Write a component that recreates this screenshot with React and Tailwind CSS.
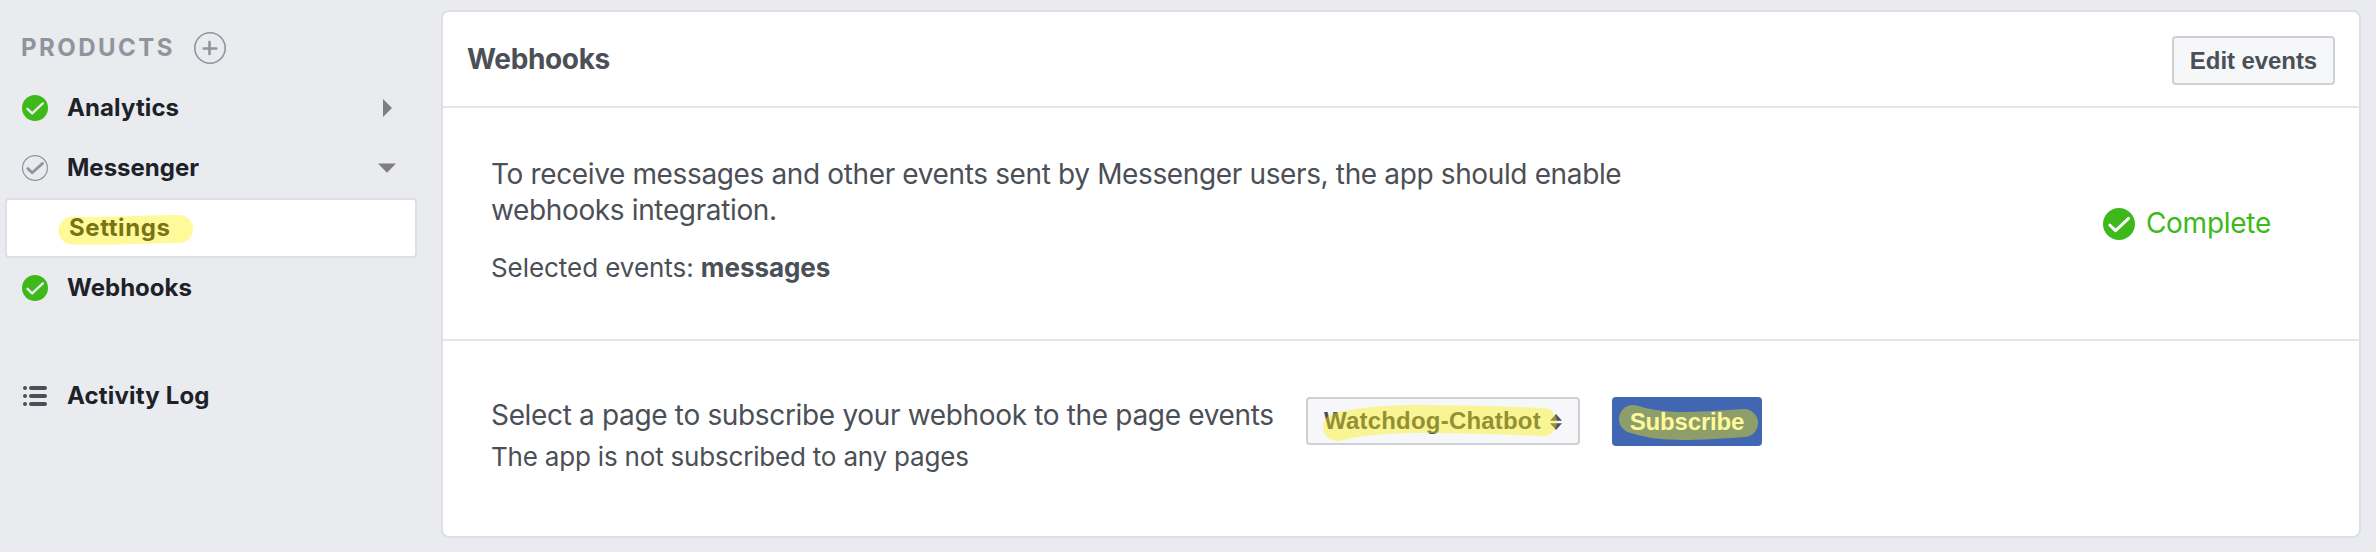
function CheckBadge({ className }) {
  return (
    <svg viewBox="0 0 26 26" className={className} fill="none">
      <circle cx="13" cy="13" r="13" fill="#3db91a" />
      <path d="M5.5 13.8 L10.2 18.4 L20.8 8.4" stroke="currentColor" strokeWidth="2.4" strokeLinecap="round" strokeLinejoin="round" />
    </svg>
  );
}

function CheckOutline() {
  return (
    <svg viewBox="0 0 26 26" className="size-[26px] shrink-0" fill="none" stroke="#90949c">
      <circle cx="13" cy="13" r="12.4" strokeWidth="1.2" />
      <path d="M5.8 13.6 L10.2 17.8 L20.6 8.4" strokeWidth="2.8" strokeLinecap="round" strokeLinejoin="round" />
    </svg>
  );
}

function PlusCircle() {
  return (
    <svg viewBox="0 0 32 32" className="size-8 shrink-0" fill="none" stroke="#90949c">
      <circle cx="16" cy="16" r="15.2" strokeWidth="1.6" />
      <path d="M9.7 16.5 H22.3 M15.5 10 V22" strokeWidth="2.6" strokeLinecap="round" />
    </svg>
  );
}

function ListIcon() {
  return (
    <svg viewBox="0 0 26 26" className="size-[26px] shrink-0" stroke="#4b4f56" strokeWidth="4" strokeLinecap="round">
      <path d="M3 5 h0.01 M9 5 H23 M3 13 h0.01 M9 13 H23 M3 21 h0.01 M9 21 H23" />
    </svg>
  );
}

function NavItem({ icon, label, labelClass = '', children }) {
  return (
    <div className="flex h-[60px] items-center gap-[19px] pl-[22px] pr-[21px]">
      {icon}
      <span className={`flex-1 text-2xl font-bold text-[#1d2129] ${labelClass}`}>{label}</span>
      {children}
    </div>
  );
}

function Marker({ d, viewBox, className }) {
  return (
    <svg viewBox={viewBox} className={`pointer-events-none absolute overflow-visible ${className}`} fill="none">
      <path d={d} stroke="#fff200" strokeOpacity="0.4" strokeWidth="28" strokeLinecap="round" />
    </svg>
  );
}

function Sidebar() {
  return (
    <nav className="w-[417px] shrink-0 pt-[18px]">
      <div className="flex h-[60px] items-center gap-[19px] pl-[21px]">
        <span className="text-2xl font-bold tracking-[2.45px] text-[#90949c]">PRODUCTS</span>
        <PlusCircle />
      </div>
      <NavItem icon={<CheckBadge className="size-[26px] shrink-0 text-[#e9ebee]" />} label="Analytics" labelClass="tracking-[0.1px]">
        <svg viewBox="0 0 14 18" className="h-[18px] w-[14px]"><path d="M1 0 V18 L10 9 Z" fill="#7f7f7f" /></svg>
      </NavItem>
      <NavItem icon={<CheckOutline />} label="Messenger">
        <svg viewBox="0 0 18 10" className="h-[10px] w-[18px]"><path d="M0 0.5 H18 L9 9.8 Z" fill="#7f7f7f" /></svg>
      </NavItem>
      <div className="relative ml-[5px] flex h-[60px] items-center rounded-[4px] border-2 border-[#dddfe2] bg-white pl-[62px]">
        <span className="text-2xl font-bold tracking-[0.58px] text-[#1d2129]">Settings</span>
        <Marker viewBox="0 0 408 56" className="left-0 top-0 h-[56px] w-[408px]" d="M65.5 30.5 C103 32 133 29 172 29" />
      </div>
      <NavItem icon={<CheckBadge className="size-[26px] shrink-0 text-[#e9ebee]" />} label="Webhooks" />
      <div className="pt-12">
        <NavItem icon={<ListIcon />} label="Activity Log" labelClass="tracking-[0.17px]" />
      </div>
    </nav>
  );
}

function WebhooksCard() {
  return (
    <section className="flex h-[528px] w-[1920px] flex-col rounded-lg border-2 border-[#dddfe2] bg-white text-[#4b4f56]">
      <header className="flex h-24 shrink-0 items-center justify-between border-b-2 border-[#e5e5e5] pl-6 pr-6">
        <h2 className="text-[28px] font-bold tracking-[-0.35px]">Webhooks</h2>
        <button className="mt-[3px] h-[49px] w-[163px] rounded-[4px] border-2 border-[#ced0d4] bg-[#f6f7f9] font-['Liberation_Sans',sans-serif] text-2xl font-bold tracking-[-0.07px]">
          Edit events
        </button>
      </header>

      <div className="flex h-[233px] shrink-0 items-start justify-between border-b-2 border-[#e5e5e5] pl-12 pr-[88px]">
        <div className="w-[1160px] pt-12">
          <p className="text-[28px] leading-9 tracking-[-0.364px]">
            To receive messages and other events sent by Messenger users, the app should enable webhooks integration.
          </p>
          <p className="mt-[22px] text-[26px] leading-9 tracking-[-0.06px]">
            Selected events: <b className="font-bold">messages</b>
          </p>
        </div>
        <div className="mt-[97px] flex items-center gap-[11px] text-[#3db91a]">
          <CheckBadge className="mt-0.5 size-8 text-white" />
          <span className="text-[28px] leading-9 tracking-[-0.27px]">Complete</span>
        </div>
      </div>

      <div className="flex items-start pl-12 pt-14">
        <div className="w-[815px]">
          <p className="text-[28px] leading-9 tracking-[-0.335px]">Select a page to subscribe your webhook to the page events</p>
          <p className="mt-[6px] text-[26px] leading-9 tracking-[-0.195px]">The app is not subscribed to any pages</p>
        </div>
        <div className="relative flex h-12 w-[274px] items-center gap-[9px] rounded-[4px] border-2 border-[#ced0d4] bg-[#f6f7f9] pl-4 font-['Liberation_Sans',sans-serif] text-2xl font-bold">
          <span className="tracking-[0.2px]">Watchdog-Chatbot</span>
          <svg viewBox="0 0 12 16" className="mt-0.5 h-4 w-3" fill="#4b4f6a">
            <path d="M0 6.7 L6 0 L12 6.7 Z M0 9.3 L6 16 L12 9.3 Z" />
          </svg>
          <Marker viewBox="0 0 270 44" className="left-0 top-0 h-[44px] w-[270px]" d="M29 28 C67 18 122 18.5 235 23" />
        </div>
        <button className="relative ml-8 h-[49px] w-[150px] rounded-[4px] bg-[#4267b2] font-['Liberation_Sans',sans-serif] text-2xl font-bold tracking-[-0.17px] text-white">
          Subscribe
          <Marker viewBox="0 0 150 49" className="left-0 top-0 h-[49px] w-[150px]" d="M21 22 C46 31 78 30 132 26" />
        </button>
      </div>
    </section>
  );
}

export default function App() {
  return (
    <main className="flex h-[552px] w-[2376px] gap-6 overflow-hidden bg-[#e9ebee] font-['Inter',sans-serif]">
      <Sidebar />
      <div className="pt-[10px]">
        <WebhooksCard />
      </div>
    </main>
  );
}
